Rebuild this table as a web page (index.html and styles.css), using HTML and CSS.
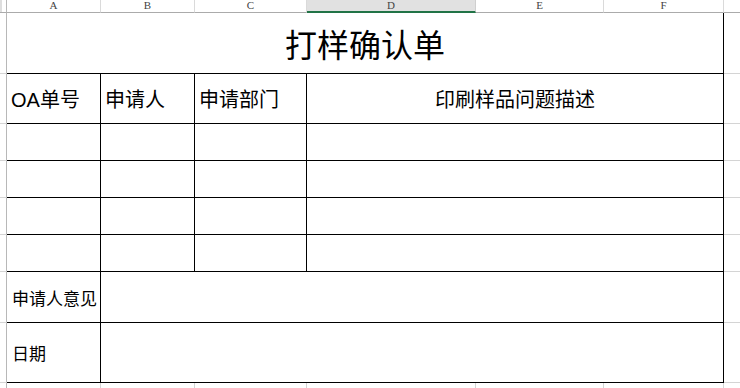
FILE: index.html
```html
<!DOCTYPE html>
<html lang="zh-CN">
<head>
<meta charset="utf-8">
<title>打样确认单</title>
<link rel="stylesheet" href="styles.css">
</head>
<body>
<div class="sheet">
  <div class="corner"></div>
  <div class="ch">A</div>
  <div class="ch">B</div>
  <div class="ch">C</div>
  <div class="ch ch-sel">D</div>
  <div class="ch">E</div>
  <div class="ch">F</div>
  <div class="ch ch-g"></div>

  <div class="rh"></div>
  <div class="c title span6">打样确认单</div>
  <div class="g"></div>

  <div class="rh"></div>
  <div class="c hd">OA单号</div>
  <div class="c hd">申请人</div>
  <div class="c hd">申请部门</div>
  <div class="c hd center span3">印刷样品问题描述</div>
  <div class="g"></div>

  <div class="rh"></div>
  <div class="c"></div><div class="c"></div><div class="c"></div><div class="c span3"></div>
  <div class="g"></div>

  <div class="rh"></div>
  <div class="c"></div><div class="c"></div><div class="c"></div><div class="c span3"></div>
  <div class="g"></div>

  <div class="rh"></div>
  <div class="c"></div><div class="c"></div><div class="c"></div><div class="c span3"></div>
  <div class="g"></div>

  <div class="rh"></div>
  <div class="c"></div><div class="c"></div><div class="c"></div><div class="c span3"></div>
  <div class="g"></div>

  <div class="rh"></div>
  <div class="c lbl">申请人意见</div>
  <div class="c span5"></div>
  <div class="g"></div>

  <div class="rh"></div>
  <div class="c lbl">日期</div>
  <div class="c span5"></div>
  <div class="g"></div>

  <div class="rh rh-last"></div>
  <div class="e"></div><div class="e"></div><div class="e"></div><div class="e"></div><div class="e"></div><div class="e"></div>
  <div class="g g-last"></div>
</div>
</body>
</html>
```

FILE: styles.css
```css
html, body {
  margin: 0;
  padding: 0;
  background: #ffffff;
}

body {
  width: 740px;
  height: 388px;
  overflow: hidden;
  font-family: "Liberation Sans", "Noto Sans CJK SC", sans-serif;
  color: #000;
}

.sheet {
  display: grid;
  grid-template-columns: 7px 94px 94px 112px 169px 128px 120px 16px;
  grid-template-rows: 13px 61px 50px 37px 37px 37px 37px 51px 60px 5px;
  width: 740px;
  height: 388px;
}

.sheet > div {
  box-sizing: border-box;
  min-width: 0;
}

/* column headers */
.corner {
  border-right: 1px solid #b8b8b8;
  border-bottom: 1px solid #ababab;
  background: linear-gradient(to right, #dedede 2px, #ffffff 2px);
}

.ch {
  border-right: 1px solid #dadada;
  border-bottom: 1px solid #ababab;
  font-family: "Liberation Serif", serif;
  font-size: 11px;
  line-height: 11px;
  color: #444;
  text-align: center;
  background: #ffffff;
}

.ch-sel {
  background: #e1e1e1;
  border-bottom: 2px solid #217346;
  border-right-color: #cfcfcf;
}

.ch-g {
  border-right: none;
}

/* row headers */
.rh {
  border-right: 1px solid #b8b8b8;
  border-bottom: 1px solid #d4d4d4;
}

.rh-last {
  border-bottom: none;
}

/* table cells */
.c {
  border-right: 1px solid #000;
  border-bottom: 1px solid #000;
  display: flex;
  align-items: center;
  padding-left: 4px;
  white-space: nowrap;
  overflow: hidden;
}

.span3 { grid-column: span 3; }
.span5 { grid-column: span 5; }
.span6 { grid-column: span 6; }

.title {
  justify-content: center;
  padding-left: 0;
  font-size: 32px;
}

.hd {
  font-size: 20px;
}

.center {
  justify-content: center;
  padding-left: 0;
}

.lbl {
  font-size: 17px;
  padding-left: 5px;
}

/* gridlines outside the table */
.g {
  border-bottom: 1px solid #d4d4d4;
}

.g-last {
  border-bottom: none;
}

.e {
  border-right: 1px solid #d4d4d4;
}
```
